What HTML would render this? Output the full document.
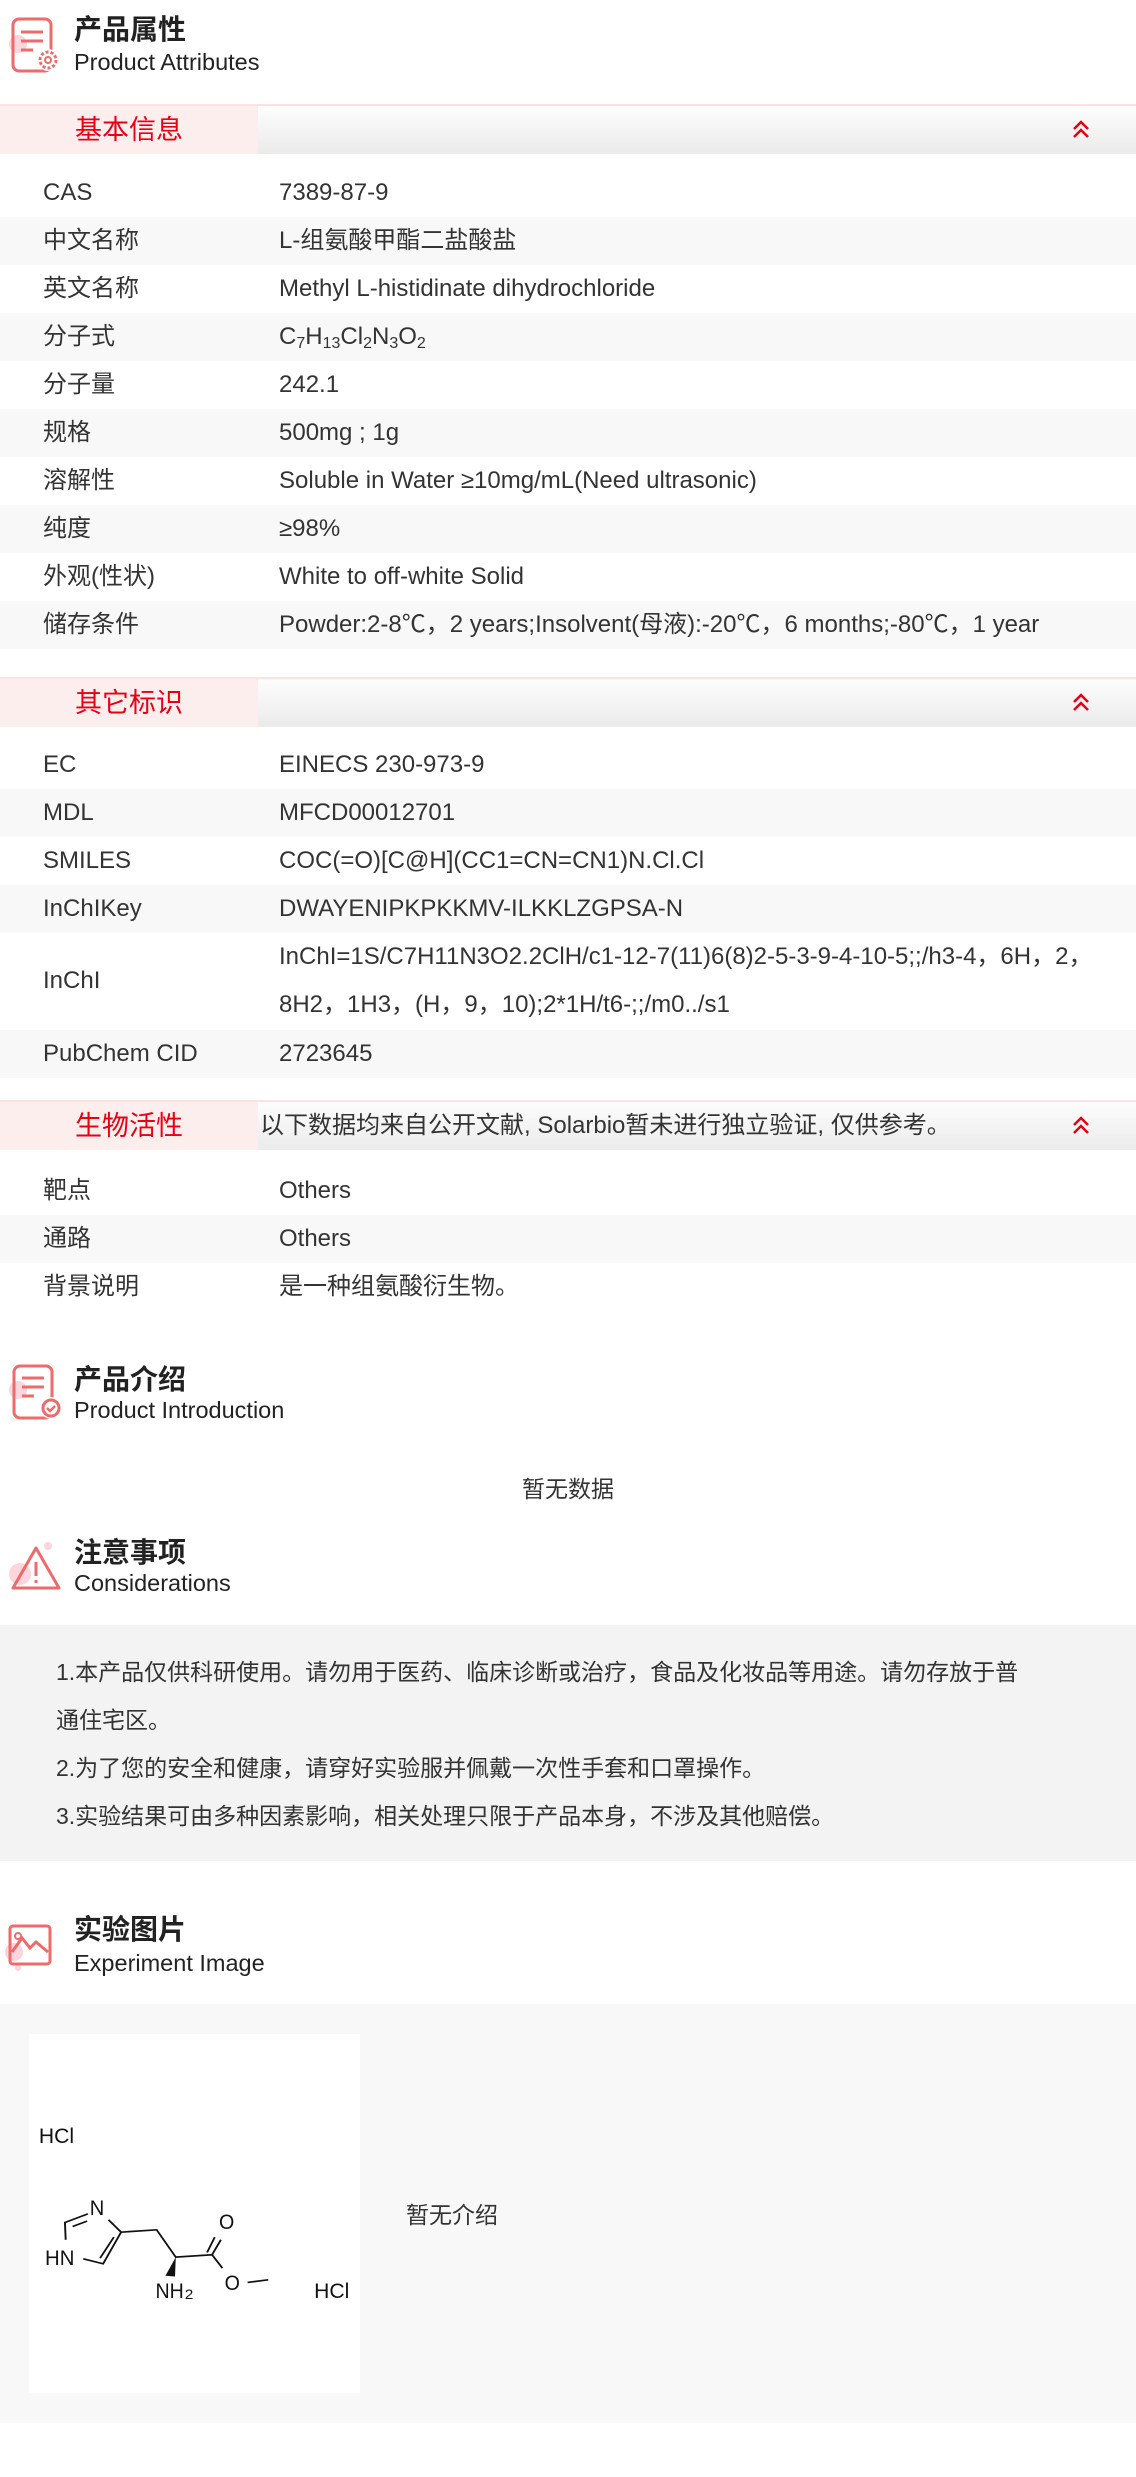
<!DOCTYPE html>
<html><head><meta charset="utf-8">
<style>
*{margin:0;padding:0;box-sizing:border-box}
body{width:1136px;height:2477px;position:relative;background:#fff;font-family:"Liberation Sans","Noto Sans CJK SC",sans-serif;color:#333;overflow:hidden}
.a{position:absolute}
.ht{position:absolute;left:74px;font-size:28px;font-weight:bold;color:#222;line-height:32px}
.hs{position:absolute;left:74px;font-size:23.5px;color:#222;line-height:26px}
.bar{position:absolute;left:0;width:1136px;height:50px;background:linear-gradient(#fdfdfd,#ebebeb);border-top:2px solid #fbe3e3}
.bar .tab{position:absolute;left:0;top:0;width:258px;height:48px;background:#fdeeee;color:#e60012;font-size:27px;line-height:48px;text-align:center}
.bar .chev{position:absolute;left:1068px;top:11px}
.row{position:absolute;left:0;width:1136px;height:48px;font-size:24px;line-height:48px}
.row.g{background:#f8f8f8}
.row .k{position:absolute;left:43px}
.row .v{position:absolute;left:279px;white-space:nowrap}
sub{font-size:16px;vertical-align:-4px;line-height:0}
</style></head><body>

<svg class="a" style="left:8px;top:14px" width="56" height="62" viewBox="0 0 56 62">
<circle cx="10" cy="30" r="9" fill="#fcd6dc"/>
<rect x="5" y="5" width="38" height="52" rx="6" fill="none" stroke="#ee6b6b" stroke-width="3"/>
<path d="M13 18h22M13 27h22M13 36h12" stroke="#ee6b6b" stroke-width="3"/>
<circle cx="40" cy="46" r="11" fill="#fff"/>
<circle cx="40" cy="46" r="8" fill="none" stroke="#ee6b6b" stroke-width="3" stroke-dasharray="3 2"/>
<circle cx="40" cy="46" r="3" fill="none" stroke="#ee6b6b" stroke-width="2"/>
</svg>
<div class="ht" style="top:14px">产品属性</div>
<div class="hs" style="top:49px">Product Attributes</div>

<div class="bar" style="top:104px"><div class="tab">基本信息</div>
<svg class="chev" width="26" height="26" viewBox="0 0 26 26"><path d="M6 12l7-7 7 7M6 20l7-7 7 7" fill="none" stroke="#e60012" stroke-width="2.5"/></svg></div>

<div class="row" style="top:169px"><span class="k">CAS</span><span class="v">7389-87-9</span></div>
<div class="row g" style="top:217px"><span class="k">中文名称</span><span class="v">L-组氨酸甲酯二盐酸盐</span></div>
<div class="row" style="top:265px"><span class="k">英文名称</span><span class="v">Methyl L-histidinate dihydrochloride</span></div>
<div class="row g" style="top:313px"><span class="k">分子式</span><span class="v">C<sub>7</sub>H<sub>13</sub>Cl<sub>2</sub>N<sub>3</sub>O<sub>2</sub></span></div>
<div class="row" style="top:361px"><span class="k">分子量</span><span class="v">242.1</span></div>
<div class="row g" style="top:409px"><span class="k">规格</span><span class="v">500mg ; 1g</span></div>
<div class="row" style="top:457px"><span class="k">溶解性</span><span class="v">Soluble in Water ≥10mg/mL(Need ultrasonic)</span></div>
<div class="row g" style="top:505px"><span class="k">纯度</span><span class="v">≥98%</span></div>
<div class="row" style="top:553px"><span class="k">外观(性状)</span><span class="v">White to off-white Solid</span></div>
<div class="row g" style="top:601px"><span class="k">储存条件</span><span class="v">Powder:2-8℃，2 years;Insolvent(母液):-20℃，6 months;-80℃，1 year</span></div>

<div class="bar" style="top:677px"><div class="tab">其它标识</div>
<svg class="chev" width="26" height="26" viewBox="0 0 26 26"><path d="M6 12l7-7 7 7M6 20l7-7 7 7" fill="none" stroke="#e60012" stroke-width="2.5"/></svg></div>

<div class="row" style="top:741px"><span class="k">EC</span><span class="v">EINECS 230-973-9</span></div>
<div class="row g" style="top:789px"><span class="k">MDL</span><span class="v">MFCD00012701</span></div>
<div class="row" style="top:837px"><span class="k">SMILES</span><span class="v">COC(=O)[C@H](CC1=CN=CN1)N.Cl.Cl</span></div>
<div class="row g" style="top:885px"><span class="k">InChIKey</span><span class="v">DWAYENIPKPKKMV-ILKKLZGPSA-N</span></div>
<div class="row" style="top:933px;height:97px"><span class="k" style="top:24px">InChI</span><span class="v">InChI=1S/C7H11N3O2.2ClH/c1-12-7(11)6(8)2-5-3-9-4-10-5;;/h3-4，6H，2，<br>8H2，1H3，(H，9，10);2*1H/t6-;;/m0../s1</span></div>
<div class="row g" style="top:1030px"><span class="k">PubChem CID</span><span class="v">2723645</span></div>

<div class="bar" style="top:1100px"><div class="tab">生物活性</div>
<span class="a" style="left:260px;top:0;line-height:48px;font-size:24px;color:#333">以下数据均来自公开文献, Solarbio暂未进行独立验证, 仅供参考。</span>
<svg class="chev" width="26" height="26" viewBox="0 0 26 26"><path d="M6 12l7-7 7 7M6 20l7-7 7 7" fill="none" stroke="#e60012" stroke-width="2.5"/></svg></div>

<div class="row" style="top:1167px"><span class="k">靶点</span><span class="v">Others</span></div>
<div class="row g" style="top:1215px"><span class="k">通路</span><span class="v">Others</span></div>
<div class="row" style="top:1263px"><span class="k">背景说明</span><span class="v">是一种组氨酸衍生物。</span></div>

<svg class="a" style="left:8px;top:1360px" width="56" height="62" viewBox="0 0 56 62">
<circle cx="10" cy="30" r="9" fill="#fcd6dc"/>
<rect x="6" y="6" width="38" height="52" rx="6" fill="none" stroke="#ee6b6b" stroke-width="3"/>
<path d="M14 18h22M14 27h22M14 36h12" stroke="#ee6b6b" stroke-width="3"/>
<circle cx="43" cy="48" r="11" fill="#fff"/>
<circle cx="43" cy="48" r="8" fill="none" stroke="#ee6b6b" stroke-width="3"/>
<path d="M39 48l3 3 5-5" fill="none" stroke="#ee6b6b" stroke-width="2.5"/>
</svg>
<div class="ht" style="top:1364px">产品介绍</div>
<div class="hs" style="top:1397px">Product Introduction</div>
<div class="a" style="left:0;width:1136px;top:1470px;text-align:center;font-size:23px">暂无数据</div>

<svg class="a" style="left:8px;top:1538px" width="56" height="56" viewBox="0 0 56 56">
<circle cx="12" cy="36" r="11" fill="#fcd6dc"/>
<circle cx="40" cy="8" r="4" fill="#fcd6dc"/>
<path d="M28 10L5 50h46z" fill="none" stroke="#ee6b6b" stroke-width="3" stroke-linejoin="round"/>
<path d="M28 24v14M28 42v3" stroke="#ee6b6b" stroke-width="3"/>
</svg>
<div class="ht" style="top:1537px">注意事项</div>
<div class="hs" style="top:1570px">Considerations</div>
<div class="a" style="left:0;top:1625px;width:1136px;height:236px;background:#f3f3f3;padding:23px 20px 0 56px;font-size:23px;line-height:48px;color:#333;white-space:nowrap">
1.本产品仅供科研使用。请勿用于医药、临床诊断或治疗，食品及化妆品等用途。请勿存放于普<br>通住宅区。<br>
2.为了您的安全和健康，请穿好实验服并佩戴一次性手套和口罩操作。<br>
3.实验结果可由多种因素影响，相关处理只限于产品本身，不涉及其他赔偿。</div>

<svg class="a" style="left:4px;top:1918px" width="56" height="56" viewBox="0 0 56 56">
<circle cx="10" cy="34" r="9" fill="#fcd6dc"/>
<circle cx="14" cy="50" r="3" fill="#fcd6dc"/>
<rect x="6" y="8" width="40" height="38" rx="3" fill="none" stroke="#ee6b6b" stroke-width="3"/>
<path d="M8 34l10-14 8 10 6-6 12 10" fill="none" stroke="#ee6b6b" stroke-width="3"/>
<circle cx="14" cy="18" r="3" fill="none" stroke="#ee6b6b" stroke-width="2"/>
</svg>
<div class="ht" style="top:1914px">实验图片</div>
<div class="hs" style="top:1950px">Experiment Image</div>
<div class="a" style="left:0;top:2004px;width:1136px;height:419px;background:#f8f8f8"></div>
<div class="a" style="left:29px;top:2034px;width:331px;height:359px;background:#fff"></div>
<svg class="a" style="left:29px;top:2034px" width="331" height="359" viewBox="76 102 866 1078" preserveAspectRatio="none">
<g font-family="Liberation Sans,sans-serif" font-size="63" fill="#111">
<text x="102" y="430" textLength="92" lengthAdjust="spacingAndGlyphs">HCl</text>
<text x="235" y="645" textLength="38" lengthAdjust="spacingAndGlyphs">N</text>
<text x="118" y="795" textLength="77" lengthAdjust="spacingAndGlyphs">HN</text>
<text x="407" y="895" textLength="74" lengthAdjust="spacingAndGlyphs">NH</text>
<text x="484" y="898" font-size="42" textLength="22" lengthAdjust="spacingAndGlyphs">2</text>
<text x="573" y="688" textLength="40" lengthAdjust="spacingAndGlyphs">O</text>
<text x="588" y="870" textLength="40" lengthAdjust="spacingAndGlyphs">O</text>
<text x="822" y="895" textLength="92" lengthAdjust="spacingAndGlyphs">HCl</text>
</g>
<g fill="none" stroke="#111" stroke-width="5">
<path d="M172 720L170 668L230 642M190 680L228 664M284 660L317 697L270 792L218 777M298 712L262 775M317 697L410 690L460 772L555 765L582 805M555 765L578 720M542 758L562 712M648 848L702 840"/>
</g>
<path d="M460 772L433 828L458 830z" fill="#111"/>
</svg>
<div class="a" style="left:406px;top:2200px;font-size:23px;line-height:30px">暂无介绍</div>
</body></html>
